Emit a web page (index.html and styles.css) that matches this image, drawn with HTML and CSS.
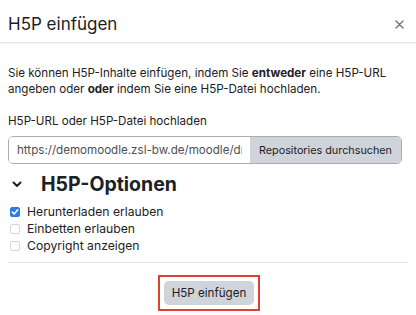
FILE: index.html
```html
<!DOCTYPE html>
<html lang="de">
<head>
  <meta charset="UTF-8" />
  <meta name="viewport" content="width=device-width, initial-scale=1.0"/>
  <title>H5P einfügen</title>
  <link rel="stylesheet" href="styles.css">
</head>
<body>
  <div class="modal">
    <div class="modal-header">
      <h1 class="modal-title">H5P einfügen</h1>
      <button class="close" type="button" aria-label="Schließen">
        <svg width="9" height="9" viewBox="0 0 9 9"><path d="M1 1L8 8M8 1L1 8" stroke="#6a737b" stroke-width="1.4" stroke-linecap="round"/></svg>
      </button>
    </div>

    <div class="modal-body">
      <p class="intro">Sie können H5P-Inhalte einfügen, indem Sie <b>entweder</b> eine H5P-URL angeben oder <b>oder</b> indem Sie eine H5P-Datei hochladen.</p>

      <label class="field-label">H5P-URL oder H5P-Datei hochladen</label>
      <div class="input-group">
        <input type="text" class="url-input" value="https://demomoodle.zsl-bw.de/moodle/draftfile.php/5/user/draft/h5p.h5p" />
        <button type="button" class="btn-browse">Repositories durchsuchen</button>
      </div>

      <h2 class="options-title">
        <svg class="chevron" width="10" height="7" viewBox="0 0 10 7"><path d="M1.5 1.5L5 5L8.5 1.5" fill="none" stroke="#1d2125" stroke-width="2" stroke-linecap="round" stroke-linejoin="round"/></svg>
        H5P-Optionen
      </h2>

      <div class="options">
        <label class="check"><input type="checkbox" checked /> Herunterladen erlauben</label>
        <label class="check"><input type="checkbox" /> Einbetten erlauben</label>
        <label class="check"><input type="checkbox" /> Copyright anzeigen</label>
      </div>
    </div>

    <div class="modal-footer">
      <span class="highlight">
        <button type="button" class="btn-submit">H5P einfügen</button>
      </span>
    </div>
  </div>
</body>
</html>
```

FILE: styles.css
```css
body {
  margin: 0;
  background: #fff;
  color: #1d2125;
  font-family: 'Inter', 'Liberation Sans', sans-serif;
}

.modal {
  width: 416px;
}

.modal-header {
  display: flex;
  align-items: center;
  justify-content: space-between;
  height: 36px;
  padding: 6px 8px 0;
  border-bottom: 1px solid #e3e6e9;
  box-shadow: 0 1px 2px rgba(0, 0, 0, 0.04);
}

.modal-title {
  margin: 0;
  font-size: 17px;
  font-weight: 400;
  line-height: 24px;
}

.close {
  background: none;
  border: none;
  padding: 0;
  width: 9px;
  height: 9px;
  margin-right: 4px;
  display: flex;
}

.modal-body {
  padding: 0 8px;
}

.intro {
  margin: 22px 0 0;
  font-size: 11.6px;
  line-height: 16px;
}

.intro b {
  font-weight: 700;
}

.field-label {
  display: block;
  margin-top: 16px;
  font-size: 11.6px;
  line-height: 16px;
}

.input-group {
  display: flex;
  height: 28px;
  margin: 7px 6px 0 0;
  border: 1px solid #a7adb3;
  border-radius: 5px;
  overflow: hidden;
  box-sizing: border-box;
}

.url-input {
  flex: 1;
  min-width: 0;
  border: none;
  padding: 0 8px;
  font-family: inherit;
  font-size: 11.6px;
  color: #495057;
  outline: none;
}

.btn-browse {
  background: #ced4da;
  border: none;
  padding: 0 9px;
  font-family: inherit;
  font-size: 10.8px;
  color: #1d2125;
  white-space: nowrap;
}

.options-title {
  display: flex;
  align-items: center;
  margin: 8px 0 0;
  font-size: 19.5px;
  font-weight: 700;
  line-height: 24px;
}

.chevron {
  margin: 1px 19px 0 4px;
}

.options {
  margin-top: 7px;
  padding-bottom: 8px;
  border-bottom: 1px solid #e3e6e9;
}

.check {
  display: flex;
  align-items: center;
  height: 17px;
  font-size: 12.2px;
}

.check input {
  appearance: none;
  width: 10px;
  height: 10px;
  margin: 0 7px 0 2px;
  border: 1px solid #d3d7db;
  border-radius: 2px;
  background: #fff;
}

.check input:checked {
  background: #2f7be6 url("data:image/svg+xml;utf8,<svg xmlns='http://www.w3.org/2000/svg' viewBox='0 0 10 10'><path d='M2.3 5.2L4.2 7L7.7 2.8' fill='none' stroke='white' stroke-width='1.6' stroke-linecap='round' stroke-linejoin='round'/></svg>") center / 10px no-repeat;
  border-color: #2f7be6;
}

.modal-footer {
  display: flex;
  justify-content: center;
  padding-top: 12px;
  margin-left: 2px;
}

.highlight {
  display: flex;
  padding: 4px;
  border: 2px solid #e0402f;
}

.btn-submit {
  width: 90px;
  height: 24px;
  padding: 0;
  background: #ced4da;
  border: none;
  border-radius: 5px;
  font-family: inherit;
  font-size: 11.6px;
  color: #1d2125;
  white-space: nowrap;
}
```
